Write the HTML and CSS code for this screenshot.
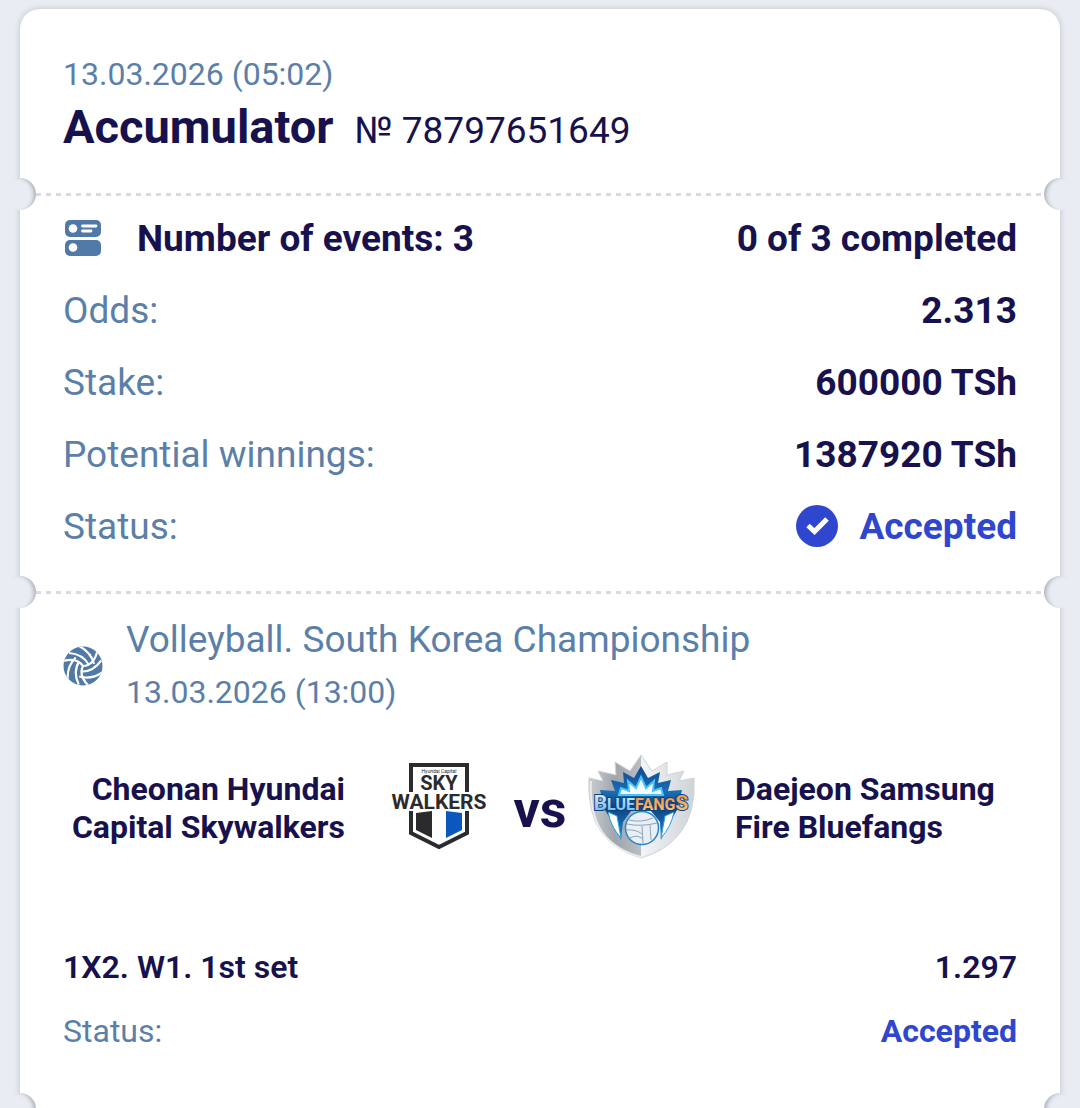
FILE: index.html
```html
<!DOCTYPE html>
<html lang="en">
<head>
<meta charset="utf-8">
<meta name="viewport" content="width=device-width, initial-scale=1">
<title>Accumulator № 78797651649</title>
<link rel="stylesheet" href="styles.css">
</head>
<body>
<main class="page">
  <article class="ticket">
    <header class="ticket-head">
      <time class="date">13.03.2026 (05:02)</time>
      <div class="ticket-title">
        <h1>Accumulator</h1>
        <span class="ticket-number">№ 78797651649</span>
      </div>
    </header>

    <div class="tear"></div>

    <dl class="summary">
      <div class="row">
        <dt class="strong events">
          <svg class="events-icon" viewBox="0 0 40 40" aria-hidden="true">
            <rect x="2" y="2" width="36" height="17" rx="5" fill="#5079a8"/>
            <rect x="2" y="22" width="36" height="16" rx="5" fill="#5079a8"/>
            <circle cx="10" cy="10.500" r="4.300" fill="#fff"/>
            <circle cx="10" cy="29.500" r="4.300" fill="#fff"/>
            <path d="M19.500 8h13.500M19.500 13h8.500" stroke="#fff" stroke-width="2.800" stroke-linecap="round"/>
          </svg>
          Number of events: 3
        </dt>
        <dd class="strong">0 of 3 completed</dd>
      </div>
      <div class="row"><dt>Odds:</dt><dd class="strong">2.313</dd></div>
      <div class="row"><dt>Stake:</dt><dd class="strong">600000 TSh</dd></div>
      <div class="row"><dt>Potential winnings:</dt><dd class="strong">1387920 TSh</dd></div>
      <div class="row">
        <dt>Status:</dt>
        <dd class="strong accepted">
          <svg class="check-icon" viewBox="0 0 42 42" aria-hidden="true">
            <circle cx="21" cy="21" r="21" fill="#2f46cf"/>
            <path d="M12 20.500l6.500 6L31 14" fill="none" stroke="#fff" stroke-width="5"/>
          </svg>
          Accepted
        </dd>
      </div>
    </dl>

    <div class="tear"></div>

    <section class="event">
      <header class="event-head">
        <svg class="ball-icon" viewBox="0 0 40 40" aria-hidden="true">
          <defs>
            <clipPath id="ball"><circle cx="20" cy="20" r="19.500"/></clipPath>
            <path id="seams" d="M20 20Q14 11 0 15M26 19Q20 8 6 7M31 18Q28 6 16 0"/>
          </defs>
          <circle cx="20" cy="20" r="19.500" fill="#5079a8"/>
          <g clip-path="url(#ball)" fill="none" stroke="#fff" stroke-width="2.200">
            <use href="#seams"/>
            <use href="#seams" transform="rotate(120 20 20)"/>
            <use href="#seams" transform="rotate(240 20 20)"/>
          </g>
        </svg>
        <div>
          <h2>Volleyball. South Korea Championship</h2>
          <time class="date">13.03.2026 (13:00)</time>
        </div>
      </header>

      <div class="match">
        <p class="team team-home">Cheonan Hyundai Capital Skywalkers</p>
        <svg class="logo" viewBox="0 0 108 108" role="img" aria-label="Skywalkers">
          <path d="M26 11H82V79L54 93L26 79Z" fill="#fff" stroke="#2b2b2d" stroke-width="4"/>
          <path d="M18 38H90V57H18Z" fill="#fff"/>
          <text x="54" y="19" class="logo-tiny">Hyundai Capital</text>
          <text x="54" y="36" class="logo-sky">SKY</text>
          <text x="54" y="55" class="logo-walkers">WALKERS</text>
          <path d="M31 59L47 57V84L31 76Z" fill="#2b2b2d"/>
          <path d="M61 57L77 59V76L61 84Z" fill="#0b57be"/>
        </svg>
        <span class="versus">vs</span>
        <svg class="logo" viewBox="0 0 108 108" role="img" aria-label="Bluefangs">
          <defs>
            <linearGradient id="metal" x1="0" x2="1">
              <stop offset="0" stop-color="#c8cdd1"/><stop offset="0.250" stop-color="#9fa6ac"/>
              <stop offset="0.500" stop-color="#b9bec3"/><stop offset="0.500" stop-color="#f3f4f6"/><stop offset="1" stop-color="#cfd4d9"/>
            </linearGradient>
            <linearGradient id="flame" x2="0" y2="1">
              <stop offset="0" stop-color="#124891"/><stop offset="0.350" stop-color="#176fb8"/>
              <stop offset="0.550" stop-color="#10427f"/><stop offset="1" stop-color="#1a8ad2"/>
            </linearGradient>
            <linearGradient id="blueText" x2="0" y2="1">
              <stop offset="0" stop-color="#e6f7ff"/><stop offset="1" stop-color="#5cb6ec"/>
            </linearGradient>
            <linearGradient id="orangeText" x2="0" y2="1">
              <stop offset="0" stop-color="#f08a2c"/><stop offset="1" stop-color="#fbc98d"/>
            </linearGradient>
          </defs>
          <path d="M2 24L16 27L11 17L29 21L28 8L43 17L54 1L65 17L80 8L80 21L97 17L92 27L107 24Q109 59 93 79Q79 97 54 104Q29 97 15 79Q0 59 2 24Z" fill="url(#metal)" stroke="#cfd3d8" stroke-width="1"/>
          <path d="M54 103Q28 96 15 78Q2 58 4 27" fill="none" stroke="#e9ecee" stroke-width="2"/>
          <path d="M13 36L28 37L24 26L37 29L36 18L47 24L54 12L61 24L73 18L71 29L84 26L81 37L95 36L90 56L84 66L74 86L73 68L64 57H44L36 68L34 86L24 66L18 56Z" fill="url(#flame)"/>
          <path d="M32 41L34 34L42 37L41 27L49 34L54 23L59 34L67 27L66 37L74 34L76 41Z" fill="#f4fcff" stroke="#4fc1f4" stroke-width="2"/>
          <path d="M21 58Q24 73 34 84L30 62ZM87 58Q84 73 74 84L78 62Z" fill="#fff" stroke="#2b9fe0" stroke-width="1"/>
          <text x="54" y="56" class="logo-fangs"><tspan class="big blue">B</tspan><tspan class="blue">LUE</tspan><tspan class="orange">FANG</tspan><tspan class="big orange">S</tspan></text>
          <circle cx="55" cy="74" r="16.500" fill="#e9eff5" stroke="#2587ca" stroke-width="1.500"/>
          <g fill="none" stroke="#8fa3b8" stroke-width="1">
            <path d="M40 70Q54 73 70 69M55 72L56 89M42 66Q54 69 66 64M63 71L64 86M39 76Q49 75 55 80M43 84Q50 80 56 85"/>
          </g>
        </svg>
        <p class="team">Daejeon Samsung Fire Bluefangs</p>
      </div>

      <dl class="bet">
        <div class="row"><dt class="strong outcome">1X2. W1. 1st set</dt><dd class="strong outcome">1.297</dd></div>
        <div class="row"><dt>Status:</dt><dd class="strong accepted">Accepted</dd></div>
      </dl>
    </section>

    <div class="tear"></div>
  </article>
</main>
</body>
</html>
```
FILE: styles.css
```css
* {
  box-sizing: border-box;
}

body,
h1,
h2,
p,
dl,
dd {
  margin: 0;
}

body {
  background: #e9edf3;
  color: #17124d;
  font-family: Roboto, "Liberation Sans", sans-serif;
  font-size: 37px;
}

.page {
  height: 100vh;
  padding: 9px 20px 0;
  overflow: hidden;
}

.ticket {
  background: #fff;
  border-radius: 20px;
  box-shadow: 0 0 6px rgba(50, 55, 75, 0.25);
}

.ticket-head {
  padding: 45px 43px 26px;
}

.date {
  display: block;
  color: #5b7fa8;
  font-size: 32px;
  line-height: 40px;
}

.ticket-title {
  display: flex;
  align-items: baseline;
  gap: 21px;
  margin-top: 12px;
}

h1 {
  font-size: 47px;
  font-weight: 700;
  line-height: 42px;
}

.ticket-number {
  line-height: 42px;
}

/* Perforated line with a half-round notch at each edge of the ticket */
.tear {
  display: flex;
  align-items: center;
  height: 32px;
  margin: 0 -16px;
  background: repeating-linear-gradient(90deg, #d9dbe1 0 5px, transparent 5px 10px) 32px center / calc(100% - 64px) 3px no-repeat;
}

.tear::before,
.tear::after {
  content: "";
  width: 32px;
  height: 32px;
  border-radius: 50%;
  background: #e9edf3;
  box-shadow: inset -5px 1px 4px -3px rgba(50, 55, 75, 0.35);
}

.tear::after {
  margin-left: auto;
  box-shadow: inset 5px 1px 4px -3px rgba(50, 55, 75, 0.35);
}

.summary {
  margin-top: -8px;
  padding: 0 43px 14px;
}

.row {
  display: flex;
  align-items: center;
  justify-content: space-between;
  height: 72px;
}

dt {
  color: #5b7fa8;
}

.strong {
  color: #17124d;
  font-weight: 700;
}

.accepted {
  display: flex;
  align-items: center;
  gap: 21px;
  color: #2f46cf;
}

.outcome {
  font-weight: 600;
}

.events {
  display: flex;
  align-items: center;
  gap: 34px;
}

.events-icon,
.ball-icon {
  width: 40px;
  height: 40px;
  flex: none;
}

.check-icon {
  width: 42px;
  height: 42px;
}

.event {
  padding: 6px 43px 30px;
}

.event-head {
  display: flex;
  align-items: center;
  gap: 23px;
}

h2 {
  color: #5b7fa8;
  font-size: 37px;
  font-weight: 400;
  line-height: 52px;
}

.event-head .date {
  line-height: 52px;
}

.match {
  display: grid;
  grid-template-columns: 1fr 108px 94px 108px 1fr;
  align-items: center;
  margin-top: 36px;
}

.team {
  padding-left: 40px;
  font-size: 32px;
  font-weight: 700;
  line-height: 38px;
}

.team-home {
  padding: 0 40px 0 0;
  text-align: right;
}

.logo {
  width: 108px;
  height: 108px;
}

.versus {
  padding-top: 4px;
  font-size: 52px;
  font-weight: 700;
  line-height: 60px;
  text-align: center;
}

.logo text {
  font-weight: 700;
  text-anchor: middle;
}

.logo-tiny,
.logo-sky,
.logo-walkers {
  fill: #2b2b2d;
}

.logo .logo-tiny {
  font-size: 5px;
  font-weight: 400;
}

.logo-sky {
  font-size: 20px;
}

.logo-walkers {
  font-size: 21px;
}

.logo-fangs {
  font-size: 16px;
  stroke: #10427f;
  stroke-width: 2px;
  paint-order: stroke;
}

.big {
  font-size: 21px;
}

.blue {
  fill: url(#blueText);
}

.orange {
  fill: url(#orangeText);
}

.bet {
  margin-top: 73px;
  font-size: 32px;
}

.bet .row {
  height: 64px;
}
```
